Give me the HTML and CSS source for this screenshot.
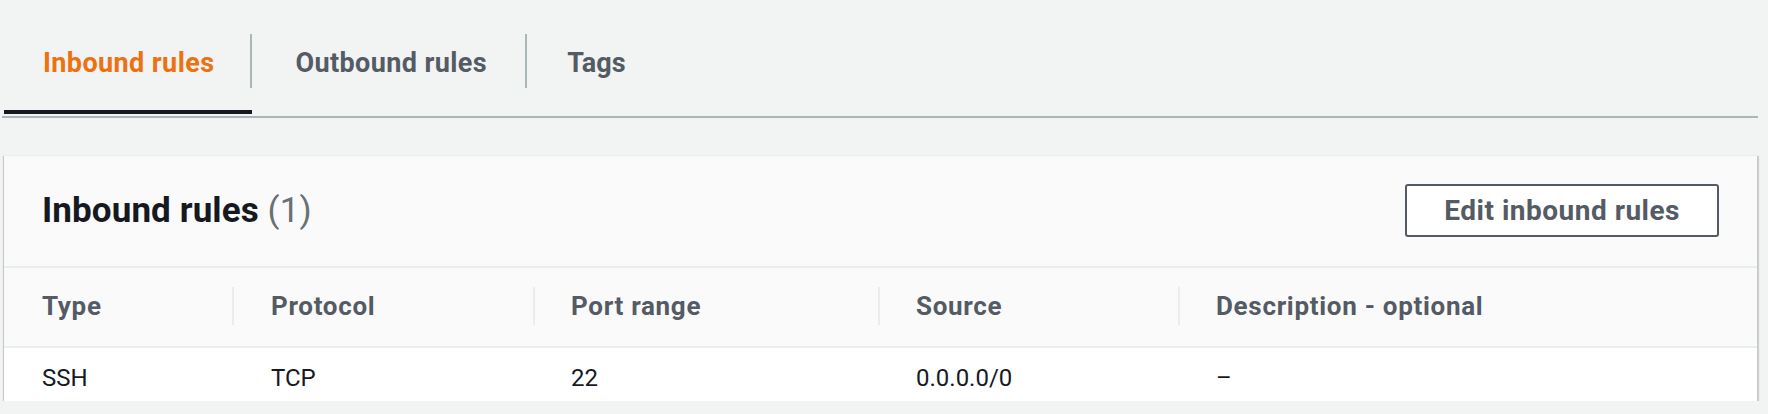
FILE: index.html
```html
<!DOCTYPE html>
<html lang="en">
<head>
<meta charset="utf-8">
<title>Security group rules</title>
<link rel="stylesheet" href="styles.css">
</head>
<body>
<div class="page">
  <div class="tabs">
    <div class="tab tab-active tab-first">Inbound rules</div>
    <div class="tab-sep"></div>
    <div class="tab tab-second">Outbound rules</div>
    <div class="tab-sep"></div>
    <div class="tab tab-third">Tags</div>
  </div>

  <div class="card">
    <div class="card-header">
      <h2 class="card-title">Inbound rules <span class="counter">(1)</span></h2>
      <button class="btn">Edit inbound rules</button>
    </div>
    <div class="table">
      <div class="row head">
        <div class="cell">Type</div>
        <div class="cell">Protocol</div>
        <div class="cell">Port range</div>
        <div class="cell">Source</div>
        <div class="cell last">Description - optional</div>
      </div>
      <div class="row body">
        <div class="cell">SSH</div>
        <div class="cell">TCP</div>
        <div class="cell">22</div>
        <div class="cell">0.0.0.0/0</div>
        <div class="cell last">–</div>
      </div>
    </div>
  </div>
</div>
</body>
</html>
```

FILE: styles.css
```css
* { box-sizing: border-box; }

html, body {
  margin: 0;
  padding: 0;
  background: #f2f3f3;
}

body {
  font-family: Roboto, "Liberation Sans", Arial, sans-serif;
  color: #16191f;
}

.page {
  padding: 0 10px 0 2px;
}

.tabs {
  display: flex;
  align-items: flex-start;
  border-bottom: 2px solid #aab7b8;
  padding: 0 0 2px 2px;
}

.tab {
  height: 114px;
  padding: 16px 38px 0 39px;
  display: flex;
  align-items: center;
  font-size: 27px;
  font-weight: 700;
  color: #545b64;
  border-bottom: 4px solid transparent;
  letter-spacing: 0.4px;
}

.tab-first {
  padding-right: 38px;
}

.tab-second {
  padding-left: 43px;
  padding-right: 38px;
}

.tab-third {
  padding-left: 40px;
  letter-spacing: 0;
}

.tab-active {
  color: #ec7211;
  border-bottom-color: #16191f;
}

.tab-sep {
  width: 2px;
  height: 54px;
  margin-top: 34px;
  background: #aab7b8;
  flex: none;
}

.tab-first + .tab-sep {
  margin-left: -2px;
}

.card {
  margin: 37px 1px 0 2px;
  background: #ffffff;
  border-top: 1px solid #eaeded;
  box-shadow: 0 2px 1px 0 rgba(0, 28, 36, 0.3), 2px 1px 1px 0 rgba(0, 28, 36, 0.15), -1px 1px 1px 0 rgba(0, 28, 36, 0.15);
}

.card-header {
  height: 112px;
  background: #fafafa;
  display: flex;
  align-items: center;
  justify-content: space-between;
  padding: 0 38px 0 38px;
  border-bottom: 2px solid #eaeded;
}

.card-title {
  margin: 0;
  font-size: 35px;
  font-weight: 700;
  color: #16191f;
  line-height: 1;
  padding-bottom: 2px;
  letter-spacing: 0.1px;
}

.counter {
  font-weight: 400;
  color: #687078;
}

.btn {
  height: 53px;
  padding: 0 37px;
  font-family: inherit;
  font-size: 28px;
  font-weight: 700;
  letter-spacing: 0.5px;
  color: #545b64;
  background: #ffffff;
  border: 2px solid #545b64;
  border-radius: 3px;
  margin-top: -2px;
}

.row {
  display: grid;
  grid-template-columns: 230px 301px 345px 300px 1fr;
  font-size: 24px;
}

.head {
  height: 80px;
  background: #fafafa;
  border-bottom: 2px solid #eaeded;
  font-weight: 700;
  font-size: 26px;
  letter-spacing: 0.7px;
  color: #545b64;
  padding-bottom: 2px;
}

.body {
  height: 53px;
  background: #ffffff;
  color: #16191f;
  padding-top: 6px;
}

.cell {
  display: flex;
  align-items: center;
  justify-content: space-between;
  padding-left: 36px;
}

.cell:first-child {
  padding-left: 38px;
}

.cell:nth-child(2) {
  padding-left: 37px;
}

.head .cell::after {
  content: "";
  width: 2px;
  height: 38px;
  background: #eaeded;
}

.head .cell.last::after {
  display: none;
}
```
